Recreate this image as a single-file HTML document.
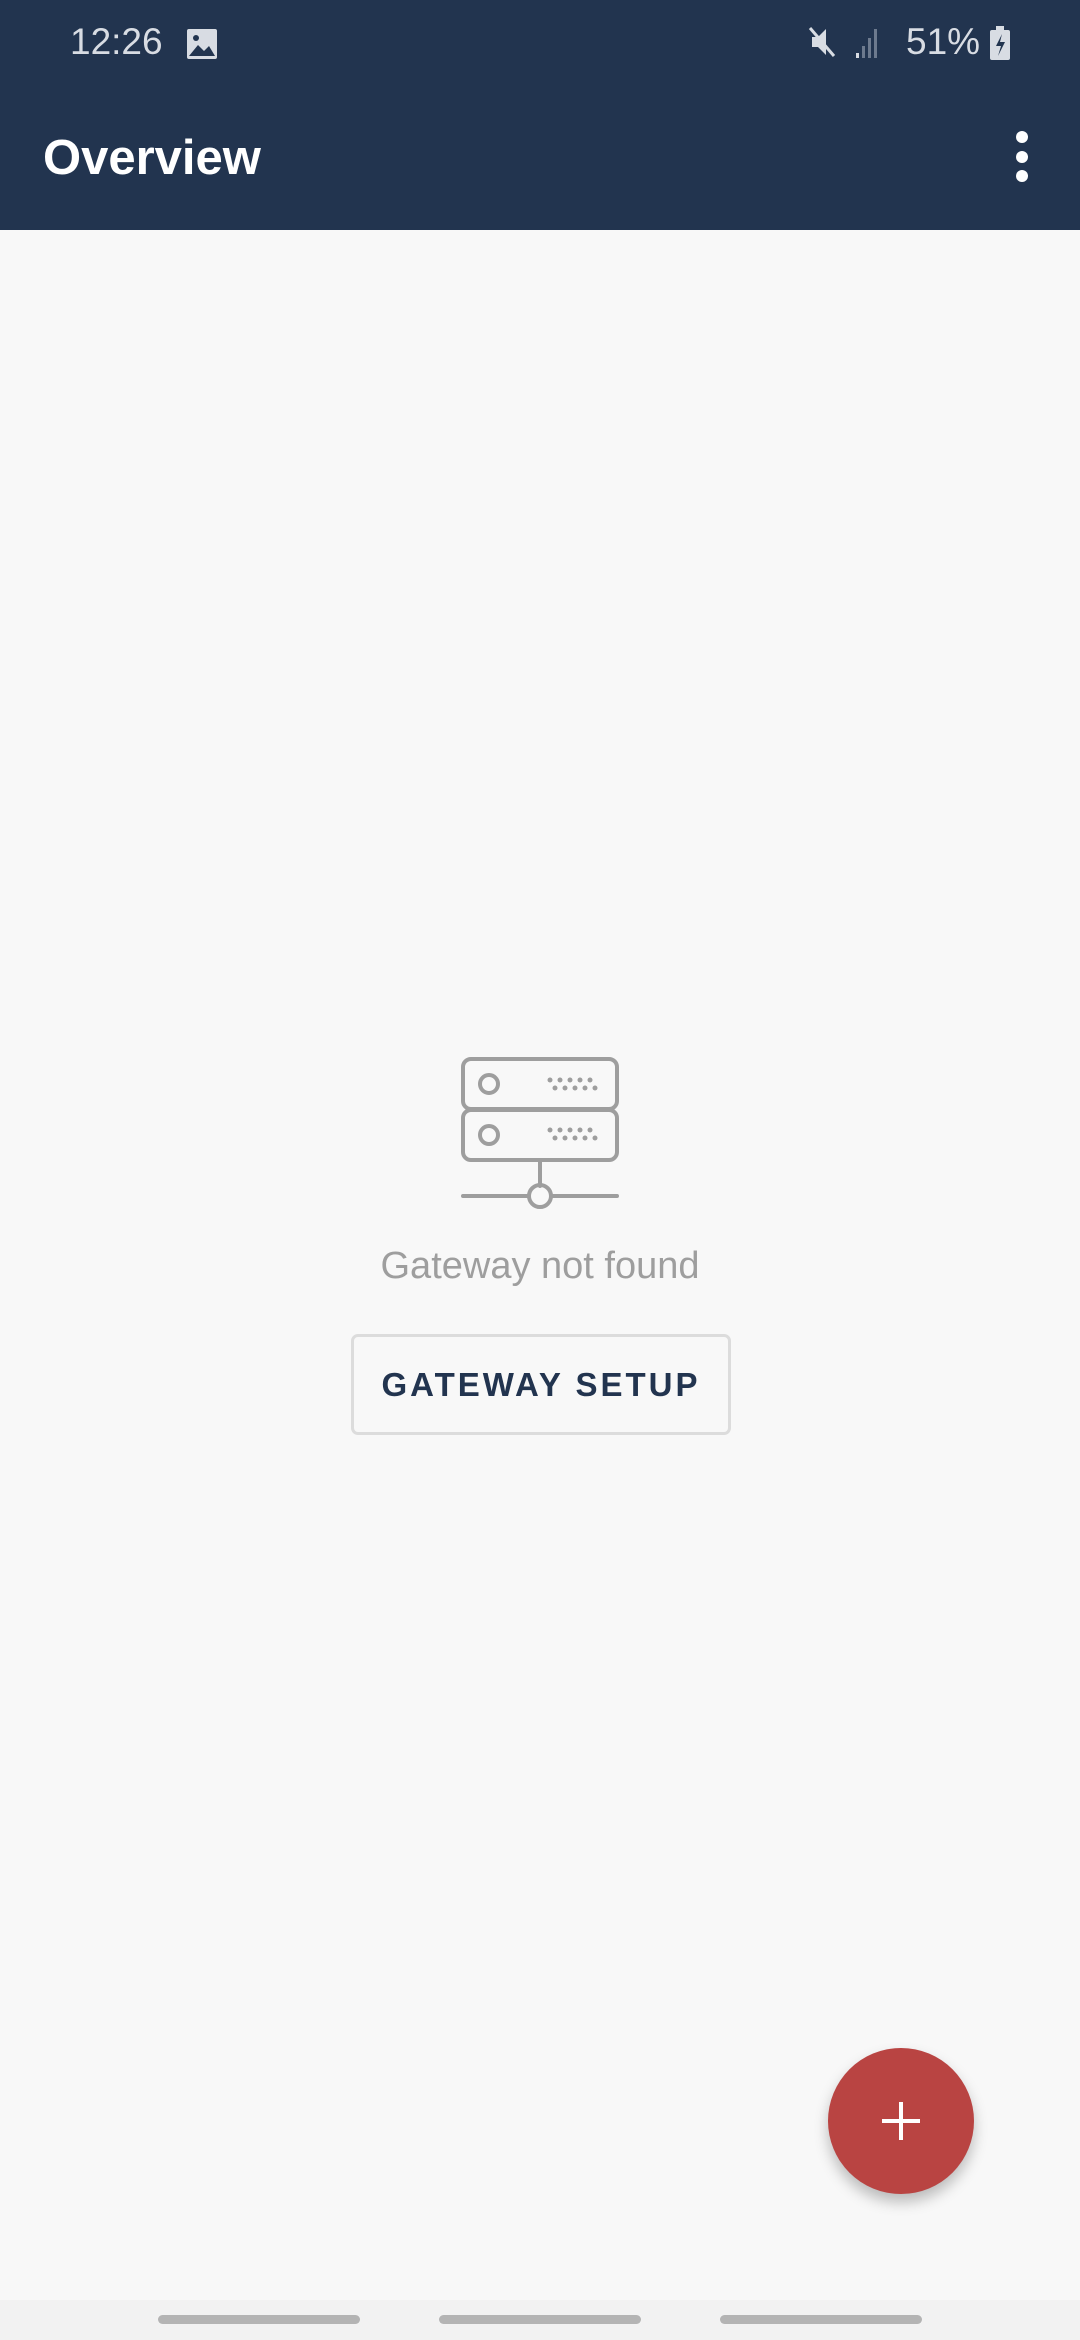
<!DOCTYPE html>
<html><head><meta charset="utf-8"><style>
body{margin:0;width:1080px;height:2340px;background:#f8f8f8;font-family:"Liberation Sans",sans-serif;position:relative;overflow:hidden}
.bar{position:absolute;left:0;top:0;width:1080px;height:230px;background:#22344f}
.abs{position:absolute}
</style></head><body>
<div class="bar"></div>
<div class="abs" style="left:70px;top:20px;font-size:37px;color:#d8dce3;line-height:44px">12:26</div>
<svg class="abs" style="left:186px;top:28px" width="32" height="32" viewBox="0 0 32 32"><rect x="1" y="1" width="30" height="30" rx="2" fill="#d8dce3"/><path d="M3 28 L12 17 L18 23 L23 18 L29 28 Z" fill="#22344f"/><circle cx="10" cy="10" r="3" fill="#22344f"/></svg>
<svg class="abs" style="left:808px;top:26px" width="90" height="34" viewBox="0 0 90 34"><path d="M4 11h6l8-8v26l-8-8H4z" fill="#d8dce3"/><path d="M2 2 L26 30" stroke="#d8dce3" stroke-width="3"/><rect x="48" y="27" width="3" height="5" fill="#d8dce3"/><rect x="54" y="20" width="3" height="12" fill="#6d7a8e"/><rect x="60" y="12" width="3" height="20" fill="#6d7a8e"/><rect x="66" y="3" width="3" height="29" fill="#6d7a8e"/></svg>
<div class="abs" style="left:906px;top:20px;font-size:37px;color:#d8dce3;line-height:44px">51%</div>
<svg class="abs" style="left:988px;top:26px" width="24" height="34" viewBox="0 0 24 34"><rect x="8" y="0" width="8" height="4" fill="#d8dce3"/><rect x="2" y="4" width="20" height="30" rx="2" fill="#d8dce3"/><path d="M14 8 L8 20 H13 L10 30 L17 16 H12 Z" fill="#22344f"/></svg>
<div class="abs" style="left:43px;top:128px;font-size:49px;font-weight:bold;color:#fff;line-height:60px">Overview</div>
<div class="abs" style="left:1016px;top:131px;width:12px;height:12px;border-radius:6px;background:#fff"></div>
<div class="abs" style="left:1016px;top:151px;width:12px;height:12px;border-radius:6px;background:#fff"></div>
<div class="abs" style="left:1016px;top:170px;width:12px;height:12px;border-radius:6px;background:#fff"></div>
<svg class="abs" style="left:455px;top:1052px" width="170" height="160" viewBox="455 1052 170 160" fill="none" stroke="#9e9e9e" stroke-width="4" stroke-linecap="round">
<rect x="463" y="1059" width="154" height="50" rx="8"/><rect x="463" y="1110" width="154" height="50" rx="8"/>
<circle cx="489" cy="1084" r="9"/><circle cx="489" cy="1135" r="9"/>
<g fill="#9e9e9e" stroke="none"><circle cx="550" cy="1080" r="2.5"/><circle cx="560" cy="1080" r="2.5"/><circle cx="570" cy="1080" r="2.5"/><circle cx="580" cy="1080" r="2.5"/><circle cx="590" cy="1080" r="2.5"/><circle cx="555" cy="1088" r="2.5"/><circle cx="565" cy="1088" r="2.5"/><circle cx="575" cy="1088" r="2.5"/><circle cx="585" cy="1088" r="2.5"/><circle cx="595" cy="1088" r="2.5"/>
<circle cx="550" cy="1130" r="2.5"/><circle cx="560" cy="1130" r="2.5"/><circle cx="570" cy="1130" r="2.5"/><circle cx="580" cy="1130" r="2.5"/><circle cx="590" cy="1130" r="2.5"/><circle cx="555" cy="1138" r="2.5"/><circle cx="565" cy="1138" r="2.5"/><circle cx="575" cy="1138" r="2.5"/><circle cx="585" cy="1138" r="2.5"/><circle cx="595" cy="1138" r="2.5"/></g>
<path d="M540 1160 V1186 M463 1196 H528 M552 1196 H617"/><circle cx="540" cy="1196" r="11"/>
</svg>
<div class="abs" style="left:0;width:1080px;top:1243px;text-align:center;font-size:38px;color:#9e9e9e;line-height:46px">Gateway not found</div>
<div class="abs" style="left:351px;top:1334px;width:374px;height:95px;border:3px solid #dcdcdc;border-radius:7px;text-align:center;line-height:95px;font-size:33px;font-weight:bold;letter-spacing:3px;color:#22344f">GATEWAY SETUP</div>
<div class="abs" style="left:828px;top:2048px;width:146px;height:146px;border-radius:73px;background:#b94442;box-shadow:0 8px 14px rgba(0,0,0,0.25)"></div>
<div class="abs" style="left:882px;top:2119px;width:38px;height:4px;background:#fff"></div>
<div class="abs" style="left:899px;top:2102px;width:4px;height:38px;background:#fff"></div>
<div class="abs" style="left:0;top:2300px;width:1080px;height:40px;background:#f2f2f2"></div>
<div class="abs" style="left:158px;top:2315px;width:202px;height:9px;border-radius:5px;background:#b4b4b4"></div>
<div class="abs" style="left:439px;top:2315px;width:202px;height:9px;border-radius:5px;background:#b4b4b4"></div>
<div class="abs" style="left:720px;top:2315px;width:202px;height:9px;border-radius:5px;background:#b4b4b4"></div>
</body></html>
